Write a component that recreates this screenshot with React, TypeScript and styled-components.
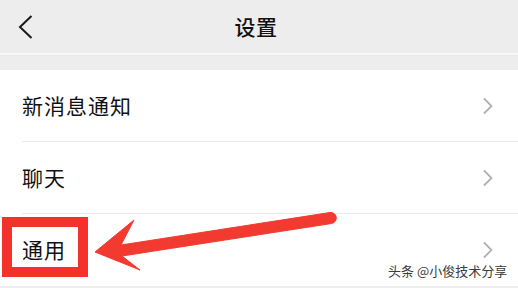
import React from "react";
import styled, { createGlobalStyle } from "styled-components";

const GlobalStyle = createGlobalStyle`
  html, body {
    margin: 0;
    padding: 0;
    background: #ededed;
    font-family: "Noto Sans CJK SC", "Noto Sans", sans-serif;
  }
`;

const Page = styled.div`
  position: relative;
  width: 518px;
  height: 288px;
  overflow: hidden;
  background: #ededed;
`;

const Header = styled.header`
  display: grid;
  grid-template-columns: 1fr auto 1fr;
  align-items: center;
  height: 53px;
  background: #ededed;
  border-bottom: 2px solid #f7f7f7;
`;

const BackButton = styled.div`
  display: flex;
  align-items: center;
  padding-left: 18px;
  height: 100%;
`;

const Title = styled.h1`
  margin: 0;
  font-size: 21px;
  font-weight: 500;
  color: #111;
  letter-spacing: 0.5px;
  line-height: 1;
  padding-right: 6px;
`;

const Band = styled.div`
  height: 14px;
  background: #ededed;
  border-top: 1px solid #e8e8e8;
`;

const List = styled.ul`
  margin: 0;
  padding: 0;
  list-style: none;
  background: #fff;
`;

const Row = styled.li<{ $last?: boolean }>`
  position: relative;
  display: flex;
  align-items: center;
  justify-content: space-between;
  height: 71px;
  padding: 0 24px 0 22px;
  border-bottom: 1px solid transparent;

  &::after {
    content: "";
    display: ${(p) => (p.$last ? "none" : "block")};
    position: absolute;
    left: 22px;
    right: 0;
    bottom: -1px;
    height: 1px;
    background: #ebebeb;
  }
`;

const Label = styled.span`
  font-size: 21px;
  color: #111;
  letter-spacing: 1px;
  line-height: 1;
`;

const Footer = styled.div`
  height: 4px;
  background: #ededed;
`;

const HighlightBox = styled.div`
  position: absolute;
  left: 2px;
  top: 217px;
  width: 66px;
  height: 40px;
  border: 10px solid #f4322b;
`;

const ArrowSvg = styled.svg`
  position: absolute;
  left: 0;
  top: 0;
`;

const Watermark = styled.span`
  position: absolute;
  left: 388px;
  top: 264px;
  font-size: 13px;
  line-height: 1;
  color: #3c3c3c;
  text-shadow: 0 0 2px #fff, 0 0 1px #fff;
  white-space: nowrap;
`;

const Chevron = () => (
  <svg width="12" height="18" viewBox="0 0 12 18">
    <polyline
      points="2,1.5 9.5,9 2,16.5"
      fill="none"
      stroke="#b2b2b2"
      strokeWidth="1.8"
    />
  </svg>
);

const items = ["新消息通知", "聊天", "通用"];

export default function App() {
  return (
    <>
      <GlobalStyle />
      <Page>
        <Header>
          <BackButton>
            <svg width="16" height="24" viewBox="0 0 16 24">
              <polyline
                points="13.5,1 2,12 13.5,23"
                fill="none"
                stroke="#1a1a1a"
                strokeWidth="2"
              />
            </svg>
          </BackButton>
          <Title>设置</Title>
          <div />
        </Header>
        <Band />
        <List>
          {items.map((t, i) => (
            <Row key={t} $last={i === items.length - 1}>
              <Label>{t}</Label>
              <Chevron />
            </Row>
          ))}
        </List>
        <Footer />
        <HighlightBox />
        <ArrowSvg width="518" height="288" viewBox="0 0 518 288">
          <path
            d="M95,252 L134,220 L121,245 L330,212.5 A5.5,5.5 0 0 1 331.5,223.5 L122,256 L140,270 Z"
            fill="#f23a30"
            stroke="#f23a30"
            strokeWidth="1"
            strokeLinejoin="round"
          />
        </ArrowSvg>
        <Watermark>头条 @小俊技术分享</Watermark>
      </Page>
    </>
  );
}
